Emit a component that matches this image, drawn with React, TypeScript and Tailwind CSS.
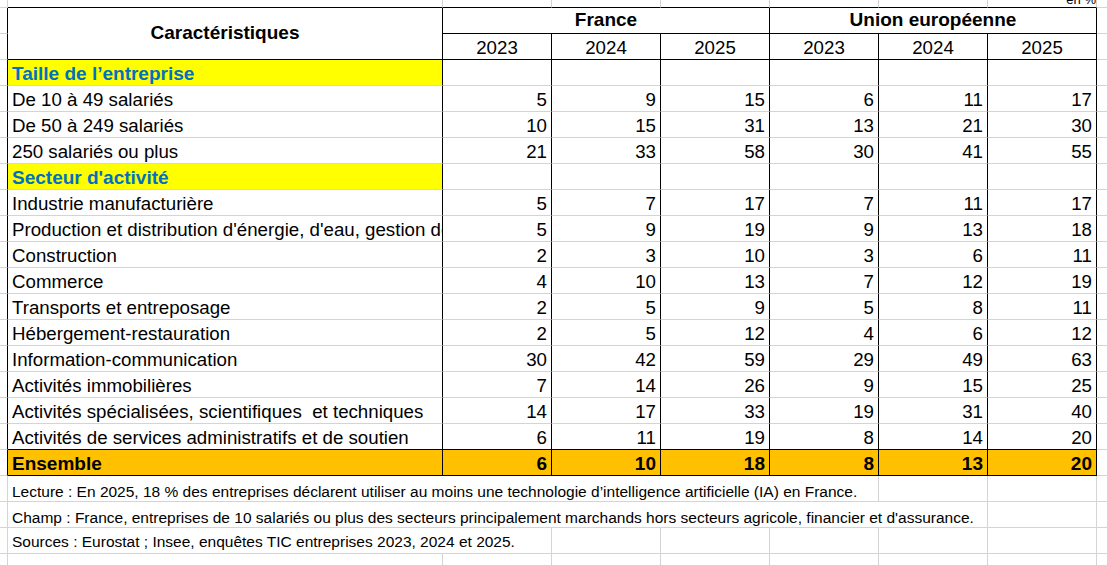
import clsx from "clsx";
import type { ReactNode } from "react";

type Line = "k" | "g" | "n";

const RIGHT: Record<Line, string> = {
  k: "border-r border-r-black",
  g: "border-r border-r-[#d4d4d4]",
  n: "",
};

const BOTTOM: Record<Line, string> = {
  k: "border-b border-b-black",
  g: "border-b border-b-[#d4d4d4]",
  n: "",
};

const SPAN: Record<number, string> = {
  1: "",
  2: "col-span-2",
  3: "col-span-3",
  5: "col-span-5",
  6: "col-span-6",
};

function Cell({
  span = 1,
  tall = false,
  r = "g",
  b = "g",
  h = "h-[26px]",
  className = "",
  children,
}: {
  span?: number;
  tall?: boolean;
  r?: Line;
  b?: Line;
  h?: string;
  className?: string;
  children?: ReactNode;
}) {
  return (
    <div
      className={clsx(
        SPAN[span],
        tall && "row-span-2",
        RIGHT[r],
        BOTTOM[b],
        h,
        "overflow-hidden whitespace-pre",
        className
      )}
    >
      {children}
    </div>
  );
}

const sizes = [
  { label: "De 10 à 49 salariés", v: [5, 9, 15, 6, 11, 17] },
  { label: "De 50 à 249 salariés", v: [10, 15, 31, 13, 21, 30] },
  { label: "250 salariés ou plus", v: [21, 33, 58, 30, 41, 55] },
];

const sectors = [
  { label: "Industrie manufacturière", v: [5, 7, 17, 7, 11, 17] },
  {
    label:
      "Production et distribution d'énergie, d'eau, gestion des déchets et dépollution",
    v: [5, 9, 19, 9, 13, 18],
  },
  { label: "Construction", v: [2, 3, 10, 3, 6, 11] },
  { label: "Commerce", v: [4, 10, 13, 7, 12, 19] },
  { label: "Transports et entreposage", v: [2, 5, 9, 5, 8, 11] },
  { label: "Hébergement-restauration", v: [2, 5, 12, 4, 6, 12] },
  { label: "Information-communication", v: [30, 42, 59, 29, 49, 63] },
  { label: "Activités immobilières", v: [7, 14, 26, 9, 15, 25] },
  {
    label: "Activités spécialisées, scientifiques  et techniques",
    v: [14, 17, 33, 19, 31, 40],
  },
  {
    label: "Activités de services administratifs et de soutien",
    v: [6, 11, 19, 8, 14, 20],
  },
];

const years = ["2023", "2024", "2025", "2023", "2024", "2025"];

const data = "px-[4px] pt-[3px] leading-[22px] text-[18.7px]";

function DataRow({ label, v, last = false }: { label: string; v: number[]; last?: boolean }) {
  const b: Line = last ? "k" : "g";
  return (
    <>
      <Cell r="k" />
      <Cell r="k" b={b} className={data}>
        {label}
      </Cell>
      {v.map((n, i) => (
        <Cell key={i} r="k" b={b} className={clsx(data, "text-right")}>
          {n}
        </Cell>
      ))}
      <Cell r="n" />
    </>
  );
}

function SectionRow({ label }: { label: string }) {
  return (
    <>
      <Cell r="k" />
      <Cell
        r="k"
        className="bg-[#ffff00] px-[4px] pt-[3px] leading-[22px] text-[19px] font-bold text-[#0070c0]"
      >
        {label}
      </Cell>
      {years.map((_, i) => (
        <Cell key={i} r="k" />
      ))}
      <Cell r="n" />
    </>
  );
}

const note = "px-[4px] leading-[20px] text-[15.5px]";

export default function App() {
  return (
    <div className="h-[565px] w-[1107px] overflow-hidden bg-white font-['Liberation_Sans','Arial',sans-serif] text-black">
      <div className="grid grid-cols-[8px_435px_109px_109px_109px_109px_109px_109px_10px]">
        {/* row above the table */}
        <Cell h="h-[8px]" />
        {[0, 1, 2, 3, 4, 5].map((i) => (
          <Cell key={i} h="h-[8px]" b="k" />
        ))}
        <Cell h="h-[8px]" b="k" className="text-right text-[13px] leading-[13px]">
          <div className="-mt-[7px]">en %</div>
        </Cell>
        <Cell h="h-[8px]" r="n" />

        {/* header */}
        <Cell r="k" />
        <Cell
          tall
          h=""
          r="k"
          b="k"
          className="flex items-center justify-center pb-[2px] text-[19px] font-bold leading-[22px]"
        >
          Caractéristiques
        </Cell>
        <Cell span={3} r="k" b="k" className="pt-[1px] text-center text-[19px] font-bold leading-[22px]">
          France
        </Cell>
        <Cell span={3} r="k" b="k" className="pt-[1px] text-center text-[19px] font-bold leading-[22px]">
          Union européenne
        </Cell>
        <Cell r="n" />

        <Cell r="k" />
        {years.map((y, i) => (
          <Cell key={i} r="k" b="k" className={clsx(data, "text-center")}>
            {y}
          </Cell>
        ))}
        <Cell r="n" />

        <SectionRow label="Taille de l’entreprise" />
        {sizes.map((row) => (
          <DataRow key={row.label} {...row} />
        ))}
        <SectionRow label="Secteur d'activité" />
        {sectors.map((row, i) => (
          <DataRow key={row.label} {...row} last={i === sectors.length - 1} />
        ))}

        {/* total */}
        <Cell r="k" />
        <Cell r="k" b="k" className="bg-[#ffc000] px-[4px] pt-[3px] text-[19px] font-bold leading-[22px]">
          Ensemble
        </Cell>
        {[6, 10, 18, 8, 13, 20].map((n, i) => (
          <Cell
            key={i}
            r="k"
            b="k"
            className="bg-[#ffc000] px-[4px] pt-[3px] text-right text-[19px] font-bold leading-[22px]"
          >
            {n}
          </Cell>
        ))}
        <Cell r="n" />

        {/* notes */}
        <Cell />
        <Cell span={5} className={clsx(note, "pt-[6px]")}>
          Lecture : En 2025, 18 % des entreprises déclarent utiliser au moins une technologie d’intelligence
          artificielle (IA) en France.
        </Cell>
        <Cell />
        <Cell />
        <Cell r="n" />

        <Cell />
        <Cell span={6} className={clsx(note, "pt-[6px]")}>
          Champ : France, entreprises de 10 salariés ou plus des secteurs principalement marchands hors secteurs
          agricole, financier et d'assurance.
        </Cell>
        <Cell />
        <Cell r="n" />

        <Cell />
        <Cell span={2} className={clsx(note, "pt-[4px]")}>
          Sources : Eurostat ; Insee, enquêtes TIC entreprises 2023, 2024 et 2025.
        </Cell>
        {[0, 1, 2, 3, 4].map((i) => (
          <Cell key={i} />
        ))}
        <Cell r="n" />

        {[0, 1, 2, 3, 4, 5, 6, 7].map((i) => (
          <Cell key={i} h="h-[11px]" b="n" />
        ))}
        <Cell h="h-[11px]" r="n" b="n" />
      </div>
    </div>
  );
}
